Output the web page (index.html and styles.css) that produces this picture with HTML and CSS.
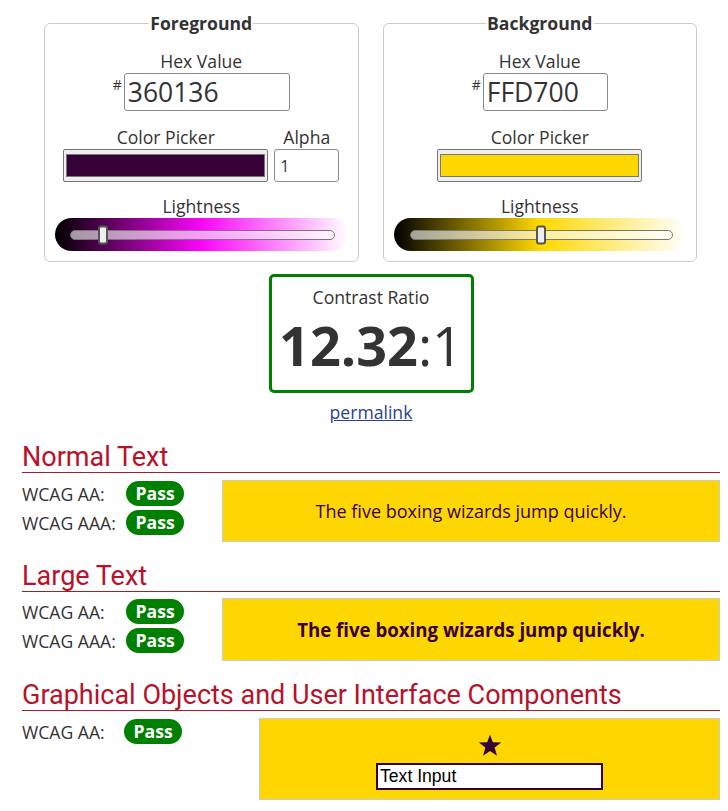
FILE: index.html
```html
<!DOCTYPE html>
<html lang="en">
<head>
<meta charset="utf-8">
<title>Contrast Checker</title>
<link rel="stylesheet" href="styles.css">
</head>
<body>
<main class="page">
  <div class="pickers">
    <fieldset class="picker">
      <legend>Foreground</legend>
      <label class="lbl" for="fg-hex">Hex Value</label>
      <div class="hex">
        <span class="hash">#</span>
        <input id="fg-hex" class="hex-input hex-fg" type="text" value="360136">
      </div>
      <div class="pick-row">
        <div class="col col-color">
          <label class="lbl" for="fg-color">Color Picker</label>
          <input id="fg-color" class="swatch" type="color" value="#360136">
        </div>
        <div class="col col-alpha">
          <label class="lbl" for="fg-alpha">Alpha</label>
          <input id="fg-alpha" class="alpha" type="text" value="1">
        </div>
      </div>
      <div class="lbl">Lightness</div>
      <div class="slider slider-fg">
        <div class="track"><span class="thumb" style="left:calc((100% - 10px) * 0.108)"></span></div>
      </div>
    </fieldset>

    <fieldset class="picker">
      <legend>Background</legend>
      <label class="lbl" for="bg-hex">Hex Value</label>
      <div class="hex">
        <span class="hash">#</span>
        <input id="bg-hex" class="hex-input hex-bg" type="text" value="FFD700">
      </div>
      <div class="pick-row">
        <div class="col col-color">
          <label class="lbl" for="bg-color">Color Picker</label>
          <input id="bg-color" class="swatch" type="color" value="#ffd700">
        </div>
      </div>
      <div class="lbl">Lightness</div>
      <div class="slider slider-bg">
        <div class="track"><span class="thumb" style="left:calc((100% - 10px) * 0.5)"></span></div>
      </div>
    </fieldset>
  </div>

  <div class="ratio">
    <div class="ratio-label">Contrast Ratio</div>
    <div class="ratio-value"><b>12.32</b>:1</div>
  </div>
  <div class="perma"><a href="#" class="permalink">permalink</a></div>

  <section class="result-section">
    <h2 class="sec-title">Normal Text</h2>
    <div class="result">
      <div class="checks">
        <div class="check"><span class="check-lbl">WCAG AA:</span><span class="pass">Pass</span></div>
        <div class="check"><span class="check-lbl">WCAG AAA:</span><span class="pass">Pass</span></div>
      </div>
      <div class="sample sample-normal">The five boxing wizards jump quickly.</div>
    </div>
  </section>

  <section class="result-section">
    <h2 class="sec-title">Large Text</h2>
    <div class="result">
      <div class="checks">
        <div class="check"><span class="check-lbl">WCAG AA:</span><span class="pass">Pass</span></div>
        <div class="check"><span class="check-lbl">WCAG AAA:</span><span class="pass">Pass</span></div>
      </div>
      <div class="sample sample-large">The five boxing wizards jump quickly.</div>
    </div>
  </section>

  <section class="result-section">
    <h2 class="sec-title">Graphical Objects and User Interface Components</h2>
    <div class="result result-ui">
      <div class="checks checks-ui">
        <div class="check"><span class="check-lbl check-lbl-ui">WCAG AA:</span><span class="pass">Pass</span></div>
      </div>
      <div class="sample sample-ui">
        <svg class="star" width="24" height="23" viewBox="0 0 24 23" aria-hidden="true">
          <path d="M12 0.5 L14.8 8.3 L23.2 8.5 L16.6 13.6 L19 21.8 L12 17 L5 21.8 L7.4 13.6 L0.8 8.5 L9.2 8.3 Z" fill="#360136"/>
        </svg>
        <input class="ui-input" type="text" value="Text Input" aria-label="Text Input">
      </div>
    </div>
  </section>
</main>
</body>
</html>
```

FILE: styles.css
```css
* { box-sizing: border-box; }

body {
  margin: 0;
  background: #fff;
  color: #333;
  font-family: "Open Sans", "DejaVu Sans", sans-serif;
  font-size: 17.6px;
}

.page {
  width: 698px;
  margin-left: 22px;
}

/* ---------- pickers ---------- */
.pickers {
  display: flex;
  gap: 24px;
  padding: 0 23px 0 22px;
}

.picker {
  flex: 1;
  margin: 12px 0 0;
  min-width: 0;
  padding: 15px 10px 10px;
  border: 1px solid #ccc;
  border-radius: 6px;
  display: flex;
  flex-direction: column;
  align-items: center;
}

.picker legend {
  margin: 0 auto;
  padding: 0 1px;
  font-weight: bold;
  font-size: 17.6px;
  line-height: 22px;
  color: #333;
}

.lbl {
  display: block;
  font-size: 17.6px;
  line-height: 24px;
  text-align: center;
  color: #333;
}

.hex {
  display: flex;
  align-items: flex-start;
  margin-bottom: 14px;
}

.hash {
  font-size: 14px;
  line-height: 1;
  margin-top: 5px;
  margin-right: 2px;
}

.hex-input {
  height: 38px;
  padding: 0 3px;
  border: 1px solid #8a8a8a;
  border-radius: 3px;
  font-family: "Open Sans", sans-serif;
  font-size: 26.5px;
  color: #333;
  background: #fff;
}
.hex-fg { width: 166px; }
.hex-bg { width: 125px; }

.pick-row {
  display: flex;
  gap: 6px;
  margin-bottom: 12px;
}

.col { display: flex; flex-direction: column; align-items: center; }
.col-color { width: 205px; }
.col-alpha { width: 65px; }

.swatch {
  display: block;
  width: 205px;
  height: 33px;
  padding: 4px 2px;
  border: 1px solid #767676;
  border-radius: 2px;
  background: #efefef;
}
.swatch::-webkit-color-swatch-wrapper { padding: 0; }
.swatch::-webkit-color-swatch { border: 1px solid #777; border-radius: 0; }

.alpha {
  display: block;
  width: 65px;
  height: 33px;
  padding: 0 5px;
  border: 1px solid #8a8a8a;
  border-radius: 3px;
  font-family: "Open Sans", sans-serif;
  font-size: 16px;
  color: #333;
  background: #fff;
}

.slider {
  align-self: stretch;
  height: 33px;
  border-radius: 17px;
  display: flex;
  align-items: center;
  padding: 0 13px 0 15px;
}
.slider-fg {
  background: linear-gradient(to right, hsl(300, 96%, 0%), hsl(300, 96%, 50%), hsl(300, 96%, 100%));
}
.slider-bg {
  padding-left: 16px;
  background: linear-gradient(to right, hsl(51, 100%, 0%), hsl(51, 100%, 50%), hsl(51, 100%, 100%));
}

.track {
  position: relative;
  flex: 1;
  height: 10px;
  border: 1px solid #777;
  border-radius: 5px;
  background: rgba(255, 255, 255, 0.6);
}

.thumb {
  position: absolute;
  top: 50%;
  transform: translateY(-50%);
  width: 10px;
  height: 19px;
  background: #eee;
  border: 2px solid #555;
  border-radius: 3px;
}

/* ---------- ratio ---------- */
.ratio {
  width: 205px;
  height: 119px;
  margin: 12px auto 0;
  border: 3px solid #008000;
  border-radius: 5px;
  padding-top: 8px;
  text-align: center;
}

.ratio-label {
  font-size: 17.6px;
  line-height: 24px;
}

.ratio-value {
  margin-top: 3px;
  font-size: 54px;
  line-height: 67px;
  color: #333;
}
.ratio-value b { font-weight: bold; }

.perma {
  text-align: center;
  margin-top: 7px;
  line-height: 24px;
}
.permalink {
  color: #2a4193;
  text-decoration: underline;
}

/* ---------- results ---------- */
.result-section { margin-top: 18px; }
.result-section + .result-section { margin-top: 19px; }

.sec-title {
  margin: 0;
  font-family: Roboto, "Liberation Sans", sans-serif;
  font-weight: normal;
  font-size: 27px;
  line-height: 30px;
  color: #b8122a;
  border-bottom: 1px solid #a31f24;
}

.result {
  display: flex;
  align-items: flex-start;
  margin-top: 7px;
}
.result-section + .result-section .result { margin-top: 6px; }
.result-section + .result-section .result-ui { margin-top: 7px; }

.checks {
  width: 200px;
  display: flex;
  flex-direction: column;
  gap: 2px;
}
.checks-ui { width: 237px; }

.check {
  display: flex;
  align-items: center;
  height: 27px;
}

.check-lbl {
  width: 104px;
  font-size: 17.6px;
  color: #333;
}
.check-lbl-ui { width: 102px; }

.pass {
  background: #008000;
  color: #fff;
  font-weight: bold;
  font-size: 17.6px;
  line-height: 25px;
  padding: 0 9.5px;
  border-radius: 13px;
}

.sample {
  flex: 1;
  border: 1px solid #ccc;
  background: #ffd700;
  color: #360136;
  display: flex;
  align-items: center;
  justify-content: center;
}
.sample-normal { height: 62px; font-size: 18px; }
.sample-large { height: 63px; font-size: 18.67px; font-weight: bold; }
.sample-ui {
  height: 82px;
  flex-direction: column;
  justify-content: flex-start;
  padding-top: 15px;
  gap: 6px;
}

.star { display: block; }

.ui-input {
  display: block;
  width: 227px;
  height: 27px;
  padding: 1px 2px;
  border: 2px solid #360136;
  background: #fff;
  color: #000;
  font-family: "Liberation Sans", Arial, sans-serif;
  font-size: 17.6px;
}
```
